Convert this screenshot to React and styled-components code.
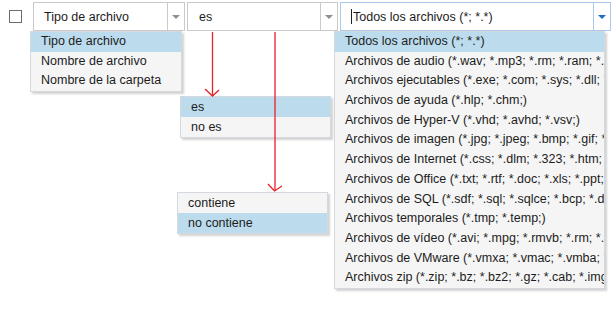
import styled, { createGlobalStyle } from "styled-components";

const Global = createGlobalStyle`
  html, body { margin: 0; padding: 0; background: #fff; }
  body { font-family: "Liberation Sans", Arial, sans-serif; font-size: 12.5px; color: #1c1c1c; }
`;

const Page = styled.div`
  position: relative;
  width: 616px;
  height: 324px;
  overflow: hidden;
`;

const Bar = styled.div`
  display: flex;
  align-items: flex-start;
  gap: 2px;
  padding: 2px 0 0 9px;
`;

const Check = styled.div`
  width: 11px;
  height: 11px;
  border: 1px solid #6b6b6b;
  background: #fff;
  margin: 8px 9px 0 0;
  flex: none;
`;

const Select = styled.div`
  display: flex;
  width: ${(p) => p.$w}px;
  height: 27px;
  border: 1px solid ${(p) => (p.$active ? "#a9c9ea" : "#cacaca")};
  background: #fff;
  box-sizing: content-box;
`;

const Value = styled.div`
  flex: 1;
  display: flex;
  align-items: center;
  padding-left: ${(p) => p.$pad}px;
  white-space: nowrap;
  overflow: hidden;
`;

const Caret = styled.span`
  width: 1px;
  height: 15px;
  background: #222;
  margin-right: 1px;
`;

const ArrowBox = styled.div`
  width: 16px;
  border-left: 1px solid ${(p) => (p.$active ? "#a9c9ea" : "#cacaca")};
  display: flex;
  align-items: center;
  justify-content: center;
  &::after {
    content: "";
    border-left: 4px solid transparent;
    border-right: 4px solid transparent;
    border-top: 4px solid ${(p) => (p.$active ? "#1b6ec2" : "#8e8e8e")};
  }
`;

const Menu = styled.div`
  position: absolute;
  left: ${(p) => p.$x}px;
  top: ${(p) => p.$y}px;
  width: ${(p) => p.$w}px;
  height: ${(p) => p.$h || "auto"};
  overflow: hidden;
  background: #f5f5f5;
  border: 1px solid #d3d9df;
  box-shadow: 2px 2px 2px rgba(0, 0, 0, 0.18);
`;

const Item = styled.div`
  height: ${(p) => p.$rh || 20}px;
  line-height: ${(p) => p.$rh || 20}px;
  padding-left: 10px;
  white-space: nowrap;
  overflow: hidden;
  background: ${(p) => (p.$on ? "#bcdcee" : "transparent")};
`;

const Overlay = styled.svg`
  position: absolute;
  left: 0;
  top: 0;
  pointer-events: none;
`;

const files = [
  "Todos los archivos (*; *.*)",
  "Archivos de audio (*.wav; *.mp3; *.rm; *.ram; *.mid; *.wma;)",
  "Archivos ejecutables (*.exe; *.com; *.sys; *.dll; *.ocx;)",
  "Archivos de ayuda (*.hlp; *.chm;)",
  "Archivos de Hyper-V (*.vhd; *.avhd; *.vsv;)",
  "Archivos de imagen (*.jpg; *.jpeg; *.bmp; *.gif; *.png;)",
  "Archivos de Internet (*.css; *.dlm; *.323; *.htm; *.html;)",
  "Archivos de Office (*.txt; *.rtf; *.doc; *.xls; *.ppt; *.docx;)",
  "Archivos de SQL (*.sdf; *.sql; *.sqlce; *.bcp; *.dri; *.mdf;)",
  "Archivos temporales (*.tmp; *.temp;)",
  "Archivos de vídeo (*.avi; *.mpg; *.rmvb; *.rm; *.wmv;)",
  "Archivos de VMware (*.vmxa; *.vmac; *.vmba; *.vmdk;)",
  "Archivos zip (*.zip; *.bz; *.bz2; *.gz; *.cab; *.img; *.iso;)",
];

export default function App() {
  return (
    <Page>
      <Global />
      <Bar>
        <Check />
        <Select $w={150}>
          <Value $pad={10}>Tipo de archivo</Value>
          <ArrowBox />
        </Select>
        <Select $w={149}>
          <Value $pad={11}>es</Value>
          <ArrowBox />
        </Select>
        <Select $w={269} $active>
          <Value $pad={10}>
            <Caret />
            Todos los archivos (*; *.*)
          </Value>
          <ArrowBox $active />
        </Select>
      </Bar>

      <Menu $x={30} $y={31} $w={150}>
        <Item $on $rh={19.5}>Tipo de archivo</Item>
        <Item $rh={19.5}>Nombre de archivo</Item>
        <Item $rh={19.5}>Nombre de la carpeta</Item>
      </Menu>

      <Menu $x={180} $y={96} $w={149}>
        <Item $on>es</Item>
        <Item>no es</Item>
      </Menu>

      <Menu $x={177} $y={192} $w={149}>
        <Item>contiene</Item>
        <Item $on>no contiene</Item>
      </Menu>

      <Menu $x={334} $y={31} $w={269} $h="256px">
        {files.map((f, i) => (
          <Item key={f} $on={i === 0} $rh={19.7}>
            {f}
          </Item>
        ))}
      </Menu>

      <Overlay width="616" height="324" viewBox="0 0 616 324">
        <g stroke="#e8202a" strokeWidth="1.3" fill="none">
          <line x1="212.5" y1="32" x2="212.5" y2="96" />
          <polyline points="205,89 212.5,96 219,90" />
          <line x1="275" y1="32" x2="275" y2="191" />
          <polyline points="268,184 274.5,191 282,186" />
        </g>
      </Overlay>
    </Page>
  );
}
